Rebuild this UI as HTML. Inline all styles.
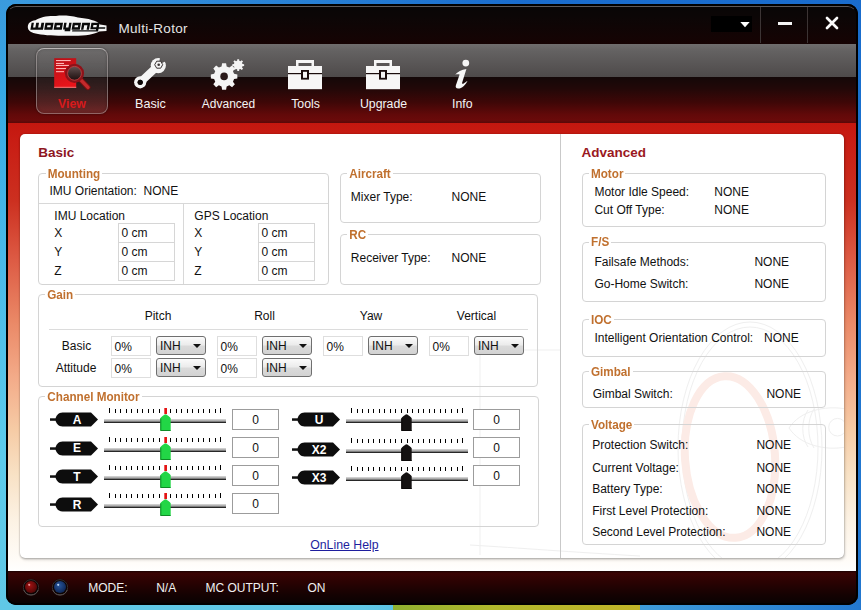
<!DOCTYPE html>
<html><head><meta charset="utf-8"><title>Multi-Rotor</title><style>
html,body{margin:0;padding:0;}
body{width:861px;height:610px;position:relative;overflow:hidden;
background:linear-gradient(60deg,rgba(16,90,200,0) 30%,rgba(16,95,200,0.78) 72%),linear-gradient(180deg,#3a9ade 0%,#36a8e4 15%,#48b8e8 40%,#5ecbea 75%,#60c8e6 100%);
font-family:"Liberation Sans", sans-serif;}
#ybar{position:absolute;left:393px;top:600px;width:247px;height:10px;background:linear-gradient(90deg,#8fb030,#b0b82c 40%,#c0b428 100%);}
#win{position:absolute;left:6px;top:4px;width:852px;height:601px;border-radius:10px;overflow:hidden;background:#000;}
#wi{position:absolute;left:-6px;top:-4px;width:861px;height:610px;}
#wi::after{content:"";position:absolute;left:6px;top:4px;width:852px;height:601px;box-sizing:border-box;border:2px solid #000;border-radius:10px;pointer-events:none;}
.r{position:absolute;}
.t{position:absolute;white-space:pre;font-family:"Liberation Sans", sans-serif;}
.grp{position:absolute;box-sizing:border-box;border:1px solid #d4d4d4;border-radius:4px;}
.lg{background:#fff;padding:0 2px;color:#c0702e;font-weight:bold;}
</style></head><body>
<div id="ybar"></div>
<div id="win"><div id="wi">
<div class="r" style="left:0px;top:0px;width:861px;height:44px;background:linear-gradient(#060606 0%,#0c0606 40%,#160303 100%);"></div>
<div class="r" style="left:7px;top:6px;width:850px;height:30px;box-sizing:border-box;border:1px solid transparent;border-top-color:#5c5858;border-radius:9px 9px 0 0;"></div>
<div class="r" style="left:760px;top:7px;width:1px;height:36px;background:#3c3434;"></div>
<div class="r" style="left:807px;top:7px;width:1px;height:36px;background:#3c3434;"></div>
<div class="r" style="left:0px;top:44px;width:861px;height:33px;background:linear-gradient(#706e6e 0%,#646262 20%,#4e4a4a 100%);"></div>
<div class="r" style="left:0px;top:77px;width:861px;height:46px;background:linear-gradient(#140808 0%,#220808 25%,#3e0707 55%,#620909 82%,#6a0a0a 94%,#5a0808 100%);"></div>
<div class="r" style="left:0px;top:123px;width:861px;height:448px;background:linear-gradient(#c4170f 0px,#c81d14 18px,#cc3020 78px,#dc5842 133px,#ea8866 198px,#f3aa88 253px,#f6cca6 308px,#f8e2c6 353px,#fcf2e4 398px,#fffcf8 438px,#ffffff 449px);"></div>
<div class="r" style="left:0px;top:571px;width:861px;height:40px;background:linear-gradient(#1a0000 0px,#3a0303 2px,#2c0202 10px,#140202 24px,#080202 34px);"></div>
<svg class="r" style="left:20px;top:10px" width="92" height="30" viewBox="20 10 92 30">
<path d="M27.8 27 C27.8 23 30.5 21 35.5 20.2 C40 17 48 15.6 56 16 C62 15.2 70 15.5 78 17.5 C88 18.5 97 20.5 100 24.5 L106.5 25.5 L106.5 31 L99 31.5 C95 34.5 84 36 72 35.8 C60 36 46 35.6 38 34 C31 33 27.8 30.5 27.8 27 Z" fill="#f6f6f6"/>
<g fill="#0a0a0a" fill-rule="evenodd" transform="translate(0 26.3) skewX(-10) translate(0 -26.3)">
<path d="M31 22.8 H43.6 V29.8 H31 Z M33.3 22.8 H35.6 V27.6 H33.3 Z M38.4 22.8 H40.8 V27.6 H38.4 Z"/>
<path d="M44.8 22.8 H53 V29.8 H44.8 Z M47.2 25.2 H50.6 V27.2 H47.2 Z"/>
<path d="M54.2 22.8 H62.4 V29.8 H54.2 Z M56.6 25.2 H60 V27.2 H56.6 Z"/>
<path d="M63.6 22.8 H66 V27.4 H68.6 V22.8 H71 V31.2 H65.4 V29.6 H68.6 V29.4 H63.6 Z"/>
<path d="M72.2 22.8 H80.4 V29.8 H72.2 Z M74.6 25.2 H78 V27.2 H74.6 Z"/>
<path d="M81.6 22.8 H89.6 V29.8 H87.2 V25.2 H84 V29.8 H81.6 Z"/>
<path d="M90.8 22.8 H99 V31.6 H73 V30.2 H96.6 V29.2 H90.8 Z M93.2 24.9 H96.6 V27.2 H93.2 Z"/>
<path d="M98 27.2 H105.5 V28.8 H98 Z"/>
</g></svg>
<div class="t" style="left:118.5px;top:20.00px;font-size:13.5px;line-height:17px;color:#e6e6e6;letter-spacing:0.3px;">Multi-Rotor</div>
<div class="r" style="left:710.5px;top:16px;width:41px;height:15.5px;background:#000;"></div>
<svg class="r" style="left:739.5px;top:22px" width="12" height="7"><path d="M0.3 0 L9.7 0 L5 5.3 Z" fill="#fff"/></svg>
<div class="r" style="left:778px;top:22px;width:14px;height:2.5px;background:#f4f4f4;"></div>
<svg class="r" style="left:824px;top:15px" width="16" height="16"><path d="M3 3 L13 13 M13 3 L3 13" stroke="#fafafa" stroke-width="2.7" stroke-linecap="round"/></svg>
<div class="r" style="left:36px;top:48px;width:72px;height:66px;box-sizing:border-box;border-radius:8px;border:1px solid rgba(190,180,180,0.5);border-top-color:rgba(220,215,215,0.65);background:linear-gradient(rgba(255,255,255,0.06),rgba(255,255,255,0.04) 44%,rgba(255,255,255,0.08) 46%,rgba(255,255,255,0.12));box-shadow:0 0 2px rgba(0,0,0,0.6),inset 0 0 3px rgba(0,0,0,0.25);"></div>
<svg class="r" style="left:48px;top:52px" width="48" height="42" viewBox="48 52 48 42">
<defs><linearGradient id="dg" x1="0" y1="0" x2="0.3" y2="1"><stop offset="0" stop-color="#b80f16"/><stop offset="1" stop-color="#e8141a"/></linearGradient>
<linearGradient id="lens" x1="0" y1="0" x2="0" y2="1"><stop offset="0" stop-color="#6a5858"/><stop offset="0.55" stop-color="#3a2a2a"/><stop offset="1" stop-color="#1a0a0a"/></linearGradient></defs>
<rect x="54.2" y="58.2" width="22" height="29.6" fill="url(#dg)"/>
<rect x="54.2" y="86.8" width="22" height="1" fill="#f07a7a"/>
<g fill="#ffb4b4"><rect x="56" y="60" width="14.7" height="1.1"/><rect x="56" y="62.9" width="8" height="1.1"/><rect x="56" y="64.9" width="13" height="1.1"/><rect x="56" y="68" width="10" height="1.1"/><rect x="56" y="71.1" width="8" height="1.1"/></g>
<path d="M80.3 79.4 L88 87.4" stroke="#7a1010" stroke-width="5.2" stroke-linecap="round"/>
<path d="M80.3 79.4 L88 87.4" stroke="#c42a2c" stroke-width="3.4" stroke-linecap="round"/>
<circle cx="74.5" cy="73.3" r="8.2" fill="url(#lens)" stroke="#8e1219" stroke-width="2.8"/>
<circle cx="74.5" cy="73.3" r="6.9" fill="none" stroke="#c04848" stroke-width="0.8"/>
</svg>
<div class="t" style="left:-28px;width:200px;text-align:center;top:96.00px;font-size:12.4px;line-height:16px;color:#d81a1c;font-weight:bold;">View</div>
<svg class="r" style="left:125px;top:52px" width="50" height="42" viewBox="125 52 50 42">
<defs><mask id="wm"><rect x="125" y="52" width="50" height="42" fill="#fff"/>
<path d="M158.7 64.7 L161 53 L172 58 Z" fill="#000"/>
<circle cx="140.2" cy="82.3" r="2.6" fill="#000"/></mask></defs>
<g mask="url(#wm)" fill="#f5f5f5">
<path d="M140.2 82.3 L157.5 66.2" stroke="#f5f5f5" stroke-width="7.8" stroke-linecap="round"/>
<circle cx="140.2" cy="82.3" r="6.1"/>
<circle cx="158.3" cy="65.6" r="7.6"/>
</g>
<circle cx="140.2" cy="82.3" r="2.5" fill="#0a0404"/>
<polygon points="162.7,64.7 160.7,68.2 156.7,68.2 154.7,64.7 156.7,61.2 160.7,61.2" fill="#f5f5f5" stroke="#3a3434" stroke-width="1"/>
<circle cx="158.7" cy="64.7" r="1.3" fill="#3a3434"/>
</svg>
<div class="t" style="left:50.5px;width:200px;text-align:center;top:96.00px;font-size:12.6px;line-height:16px;color:#f4f4f4;">Basic</div>
<svg class="r" style="left:205px;top:55px" width="45" height="40" viewBox="0 0 45 40">
<polygon points="29.08,18.84 32.35,19.41 32.35,23.39 29.08,23.96 27.97,26.64 29.88,29.36 27.06,32.18 24.34,30.27 21.66,31.38 21.09,34.65 17.11,34.65 16.54,31.38 13.86,30.27 11.14,32.18 8.32,29.36 10.23,26.64 9.12,23.96 5.85,23.39 5.85,19.41 9.12,18.84 10.23,16.16 8.32,13.44 11.14,10.62 13.86,12.53 16.54,11.42 17.11,8.15 21.09,8.15 21.66,11.42 24.34,12.53 27.06,10.62 29.88,13.44 27.97,16.16" fill="#f4f4f4"/><circle cx="19.1" cy="21.4" r="3.8" fill="#2a1a1a"/>
<polygon points="37.46,9.01 39.13,9.21 39.13,10.99 37.46,11.19 36.99,12.34 38.03,13.66 36.76,14.93 35.44,13.89 34.29,14.36 34.09,16.03 32.31,16.03 32.11,14.36 30.96,13.89 29.64,14.93 28.37,13.66 29.41,12.34 28.94,11.19 27.27,10.99 27.27,9.21 28.94,9.01 29.41,7.86 28.37,6.54 29.64,5.27 30.96,6.31 32.11,5.84 32.31,4.17 34.09,4.17 34.29,5.84 35.44,6.31 36.76,5.27 38.03,6.54 36.99,7.86" fill="#f4f4f4"/>
</svg>
<div class="t" style="left:128.5px;width:200px;text-align:center;top:97.00px;font-size:12px;line-height:15px;color:#f4f4f4;">Advanced</div>
<svg class="r" style="left:288px;top:59px" width="36" height="31" viewBox="0 0 36 31">
<path d="M8 1 L26 1 L26 7 L8 7 Z M10.5 4 L23.5 4 L23.5 7 L10.5 7 Z" fill="#f6f6f6" fill-rule="evenodd"/>
<rect x="0" y="7" width="34" height="23.2" fill="#f6f6f6"/>
<rect x="0" y="14" width="34" height="1.2" fill="#1a0c0c"/>
<rect x="13" y="11" width="8" height="9.6" fill="#1a0c0c"/>
<rect x="15" y="12.8" width="4" height="6" fill="#f6f6f6"/>
</svg>
<div class="t" style="left:205.5px;width:200px;text-align:center;top:97.00px;font-size:12.3px;line-height:15px;color:#f4f4f4;">Tools</div>
<svg class="r" style="left:366px;top:59px" width="36" height="31" viewBox="0 0 36 31">
<path d="M8 1 L26 1 L26 7 L8 7 Z M10.5 4 L23.5 4 L23.5 7 L10.5 7 Z" fill="#f6f6f6" fill-rule="evenodd"/>
<rect x="0" y="7" width="34" height="23.2" fill="#f6f6f6"/>
<rect x="0" y="14" width="34" height="1.2" fill="#1a0c0c"/>
<rect x="13" y="11" width="8" height="9.6" fill="#1a0c0c"/>
<rect x="15" y="12.8" width="4" height="6" fill="#f6f6f6"/>
</svg>
<div class="t" style="left:283.5px;width:200px;text-align:center;top:97.00px;font-size:12.3px;line-height:15px;color:#f4f4f4;">Upgrade</div>
<svg class="r" style="left:450px;top:58px" width="22" height="32" viewBox="0 0 22 32">
<circle cx="15.8" cy="5.1" r="3.4" fill="#f6f6f6"/>
<path d="M5.2 16.6 C7.5 14.2 11.5 11.6 16.4 11.1 L12.2 24.4 C11.8 25.9 12.6 26.2 14 25.2 L17.6 22.8 C15.6 27 12 30.6 8.2 30.6 C5.9 30.6 5.3 29.2 5.9 27.3 L9.6 16.6 C8.6 16 7 16 5.2 16.6 Z" fill="#f6f6f6"/>
</svg>
<div class="t" style="left:362.3px;width:200px;text-align:center;top:97.00px;font-size:12.3px;line-height:15px;color:#f4f4f4;">Info</div>
<div class="r" style="left:20px;top:134px;width:824px;height:424px;background:#fff;border-radius:5px;box-shadow:0 0 2px rgba(0,0,0,0.28),0 1px 2px rgba(0,0,0,0.14),1px 2px 3px rgba(0,0,0,0.14);"></div>
<svg class="r" style="left:440px;top:300px" width="404" height="258" viewBox="440 300 404 258">
<g fill="none" stroke="#efefef" stroke-width="1">
<path d="M480 350 L560 350 M480 350 L480 555 M470 545 C520 548 570 552 640 556"/>
<ellipse cx="750" cy="448" rx="72" ry="126"/>
<ellipse cx="750" cy="448" rx="68" ry="121"/>
<path d="M789 428 C800 411 825 405 846 409 M789 428 C800 445 825 451 846 447 M808 410 C801 420 801 437 808 447 M814 409 C807 420 807 437 814 448"/>
<circle cx="837.5" cy="427.2" r="8.8"/>
</g>
<ellipse cx="730" cy="457" rx="45" ry="81" fill="none" stroke="#fcebe6" stroke-width="8" transform="rotate(-4 730 457)"/>
</svg>
<div class="r" style="left:560px;top:134px;width:1px;height:424px;background:#c9c9c9;"></div>
<div class="t" style="left:38.3px;top:144.00px;font-size:13.5px;line-height:17px;color:#8e1622;font-weight:bold;">Basic</div>
<div class="t" style="left:581.5px;top:144.00px;font-size:13.5px;line-height:17px;color:#9a1822;font-weight:bold;">Advanced</div>
<div class="grp" style="left:38px;top:173px;width:291px;height:112px;"></div>
<div class="t lg" style="left:45.7px;top:167.00px;font-size:11.7px;line-height:14px;transform:scaleY(1.12);transform-origin:0 11px;">Mounting</div>
<div class="t" style="left:49.5px;top:184.00px;font-size:12px;line-height:15px;color:#111;">IMU Orientation:  NONE</div>
<div class="r" style="left:39px;top:203px;width:289px;height:1px;background:#d8d8d8;"></div>
<div class="r" style="left:183px;top:204px;width:1px;height:80px;background:#d8d8d8;"></div>
<div class="t" style="left:54.3px;top:209.00px;font-size:12px;line-height:15px;color:#111;">IMU Location</div>
<div class="t" style="left:194.3px;top:209.00px;font-size:12px;line-height:15px;color:#111;">GPS Location</div>
<div class="t" style="left:54.3px;top:226.00px;font-size:12px;line-height:15px;color:#111;">X</div>
<div class="t" style="left:194.3px;top:226.00px;font-size:12px;line-height:15px;color:#111;">X</div>
<div class="t" style="left:54.3px;top:245.00px;font-size:12px;line-height:15px;color:#111;">Y</div>
<div class="t" style="left:194.3px;top:245.00px;font-size:12px;line-height:15px;color:#111;">Y</div>
<div class="t" style="left:54.3px;top:264.00px;font-size:12px;line-height:15px;color:#111;">Z</div>
<div class="t" style="left:194.3px;top:264.00px;font-size:12px;line-height:15px;color:#111;">Z</div>
<div class="r" style="left:118px;top:223px;width:57px;height:58px;box-sizing:border-box;border:1px solid #d6d6d6;"></div>
<div class="r" style="left:118px;top:242px;width:57px;height:1px;background:#d6d6d6;"></div>
<div class="r" style="left:118px;top:261px;width:57px;height:1px;background:#d6d6d6;"></div>
<div class="t" style="left:121.5px;top:226.00px;font-size:12px;line-height:15px;color:#111;">0 cm</div>
<div class="t" style="left:121.5px;top:245.00px;font-size:12px;line-height:15px;color:#111;">0 cm</div>
<div class="t" style="left:121.5px;top:264.00px;font-size:12px;line-height:15px;color:#111;">0 cm</div>
<div class="r" style="left:258px;top:223px;width:57px;height:58px;box-sizing:border-box;border:1px solid #d6d6d6;"></div>
<div class="r" style="left:258px;top:242px;width:57px;height:1px;background:#d6d6d6;"></div>
<div class="r" style="left:258px;top:261px;width:57px;height:1px;background:#d6d6d6;"></div>
<div class="t" style="left:261.5px;top:226.00px;font-size:12px;line-height:15px;color:#111;">0 cm</div>
<div class="t" style="left:261.5px;top:245.00px;font-size:12px;line-height:15px;color:#111;">0 cm</div>
<div class="t" style="left:261.5px;top:264.00px;font-size:12px;line-height:15px;color:#111;">0 cm</div>
<div class="grp" style="left:340px;top:173px;width:201px;height:50px;"></div>
<div class="t lg" style="left:347.2px;top:167.00px;font-size:11.7px;line-height:14px;transform:scaleY(1.12);transform-origin:0 11px;">Aircraft</div>
<div class="t" style="left:350.8px;top:190.00px;font-size:12px;line-height:15px;color:#111;">Mixer Type:</div>
<div class="t" style="left:451.6px;top:190.00px;font-size:12px;line-height:15px;color:#111;">NONE</div>
<div class="grp" style="left:340px;top:234px;width:201px;height:51px;"></div>
<div class="t lg" style="left:347.2px;top:228.00px;font-size:11.7px;line-height:14px;transform:scaleY(1.12);transform-origin:0 11px;">RC</div>
<div class="t" style="left:350.8px;top:251.00px;font-size:12px;line-height:15px;color:#111;">Receiver Type:</div>
<div class="t" style="left:451.6px;top:251.00px;font-size:12px;line-height:15px;color:#111;">NONE</div>
<div class="grp" style="left:38px;top:294px;width:500px;height:93px;"></div>
<div class="t lg" style="left:45.2px;top:288.00px;font-size:11.7px;line-height:14px;transform:scaleY(1.12);transform-origin:0 11px;">Gain</div>
<div class="t" style="left:58px;width:200px;text-align:center;top:309.00px;font-size:12px;line-height:15px;color:#111;">Pitch</div>
<div class="t" style="left:164.5px;width:200px;text-align:center;top:309.00px;font-size:12px;line-height:15px;color:#111;">Roll</div>
<div class="t" style="left:271px;width:200px;text-align:center;top:309.00px;font-size:12px;line-height:15px;color:#111;">Yaw</div>
<div class="t" style="left:376.5px;width:200px;text-align:center;top:309.00px;font-size:12px;line-height:15px;color:#111;">Vertical</div>
<div class="r" style="left:49px;top:329px;width:479px;height:1px;background:#dcdcdc;"></div>
<div class="t" style="left:-23.5px;width:200px;text-align:center;top:339.00px;font-size:12px;line-height:15px;color:#111;">Basic</div>
<div class="t" style="left:-24px;width:200px;text-align:center;top:361.00px;font-size:12px;line-height:15px;color:#111;">Attitude</div>
<div class="r" style="left:111px;top:336px;width:40px;height:19.5px;box-sizing:border-box;border:1px solid #dedede;background:#fff;"></div>
<div class="t" style="left:114.5px;top:340.00px;font-size:12px;line-height:15px;color:#111;">0%</div>
<div class="r" style="left:156px;top:336px;width:50px;height:19px;box-sizing:border-box;border:1px solid #6f6f6f;border-radius:3px;background:linear-gradient(#fbfbfb 0%,#ececec 45%,#dadada 55%,#d2d2d2 100%);"></div>
<div class="t" style="left:160px;top:339.00px;font-size:12px;line-height:15px;color:#111;">INH</div>
<svg class="r" style="left:192.6px;top:344px" width="8" height="4"><path d="M0 0 L8 0 L4 4 Z" fill="#111"/></svg>
<div class="r" style="left:111px;top:358px;width:40px;height:19.5px;box-sizing:border-box;border:1px solid #dedede;background:#fff;"></div>
<div class="t" style="left:114.5px;top:362.00px;font-size:12px;line-height:15px;color:#111;">0%</div>
<div class="r" style="left:156px;top:358px;width:50px;height:19px;box-sizing:border-box;border:1px solid #6f6f6f;border-radius:3px;background:linear-gradient(#fbfbfb 0%,#ececec 45%,#dadada 55%,#d2d2d2 100%);"></div>
<div class="t" style="left:160px;top:361.00px;font-size:12px;line-height:15px;color:#111;">INH</div>
<svg class="r" style="left:192.6px;top:366px" width="8" height="4"><path d="M0 0 L8 0 L4 4 Z" fill="#111"/></svg>
<div class="r" style="left:217px;top:336px;width:40px;height:19.5px;box-sizing:border-box;border:1px solid #dedede;background:#fff;"></div>
<div class="t" style="left:220.5px;top:340.00px;font-size:12px;line-height:15px;color:#111;">0%</div>
<div class="r" style="left:262px;top:336px;width:50px;height:19px;box-sizing:border-box;border:1px solid #6f6f6f;border-radius:3px;background:linear-gradient(#fbfbfb 0%,#ececec 45%,#dadada 55%,#d2d2d2 100%);"></div>
<div class="t" style="left:266px;top:339.00px;font-size:12px;line-height:15px;color:#111;">INH</div>
<svg class="r" style="left:298.6px;top:344px" width="8" height="4"><path d="M0 0 L8 0 L4 4 Z" fill="#111"/></svg>
<div class="r" style="left:217px;top:358px;width:40px;height:19.5px;box-sizing:border-box;border:1px solid #dedede;background:#fff;"></div>
<div class="t" style="left:220.5px;top:362.00px;font-size:12px;line-height:15px;color:#111;">0%</div>
<div class="r" style="left:262px;top:358px;width:50px;height:19px;box-sizing:border-box;border:1px solid #6f6f6f;border-radius:3px;background:linear-gradient(#fbfbfb 0%,#ececec 45%,#dadada 55%,#d2d2d2 100%);"></div>
<div class="t" style="left:266px;top:361.00px;font-size:12px;line-height:15px;color:#111;">INH</div>
<svg class="r" style="left:298.6px;top:366px" width="8" height="4"><path d="M0 0 L8 0 L4 4 Z" fill="#111"/></svg>
<div class="r" style="left:323px;top:336px;width:40px;height:19.5px;box-sizing:border-box;border:1px solid #dedede;background:#fff;"></div>
<div class="t" style="left:326.5px;top:340.00px;font-size:12px;line-height:15px;color:#111;">0%</div>
<div class="r" style="left:368px;top:336px;width:50px;height:19px;box-sizing:border-box;border:1px solid #6f6f6f;border-radius:3px;background:linear-gradient(#fbfbfb 0%,#ececec 45%,#dadada 55%,#d2d2d2 100%);"></div>
<div class="t" style="left:372px;top:339.00px;font-size:12px;line-height:15px;color:#111;">INH</div>
<svg class="r" style="left:404.6px;top:344px" width="8" height="4"><path d="M0 0 L8 0 L4 4 Z" fill="#111"/></svg>
<div class="r" style="left:429px;top:336px;width:40px;height:19.5px;box-sizing:border-box;border:1px solid #dedede;background:#fff;"></div>
<div class="t" style="left:432.5px;top:340.00px;font-size:12px;line-height:15px;color:#111;">0%</div>
<div class="r" style="left:474px;top:336px;width:50px;height:19px;box-sizing:border-box;border:1px solid #6f6f6f;border-radius:3px;background:linear-gradient(#fbfbfb 0%,#ececec 45%,#dadada 55%,#d2d2d2 100%);"></div>
<div class="t" style="left:478px;top:339.00px;font-size:12px;line-height:15px;color:#111;">INH</div>
<svg class="r" style="left:510.6px;top:344px" width="8" height="4"><path d="M0 0 L8 0 L4 4 Z" fill="#111"/></svg>
<div class="grp" style="left:38px;top:396px;width:501px;height:131px;"></div>
<div class="t lg" style="left:45.3px;top:390.00px;font-size:11.7px;line-height:14px;transform:scaleY(1.12);transform-origin:0 11px;">Channel Monitor</div>
<svg class="r" style="left:50px;top:412.1px" width="50" height="15" viewBox="0 0 50 15">
<rect x="0" y="6.3" width="7" height="2.5" fill="#111"/>
<path d="M12.5 0.5 L41 0.5 L48 7.5 L41 14.5 L12.5 14.5 C8.5 14.5 5.5 11 5.5 7.5 C5.5 4 8.5 0.5 12.5 0.5 Z" fill="#0d0d0d"/>
</svg>
<div class="t" style="left:-23px;width:200px;text-align:center;top:413.00px;font-size:12px;line-height:15px;color:#fff;font-weight:bold;">A</div>
<div class="r" style="left:104px;top:419px;width:122px;height:4px;background:linear-gradient(#dadada 0%,#bdbdbd 30%,#8c8c8c 60%,#2c2c2c 78%,#222 100%);"></div>
<svg class="r" style="left:104px;top:408px" width="124" height="7"><rect x="5" y="0" width="1" height="5" fill="#000"/><rect x="11" y="1" width="1" height="4" fill="#000"/><rect x="16" y="1" width="1" height="4" fill="#000"/><rect x="22" y="1" width="1" height="4" fill="#000"/><rect x="27" y="1" width="1" height="4" fill="#000"/><rect x="33" y="1" width="1" height="4" fill="#000"/><rect x="38" y="1" width="1" height="4" fill="#000"/><rect x="44" y="1" width="1" height="4" fill="#000"/><rect x="49" y="1" width="1" height="4" fill="#000"/><rect x="55" y="1" width="1" height="4" fill="#000"/><rect x="66" y="1" width="1" height="4" fill="#000"/><rect x="72" y="1" width="1" height="4" fill="#000"/><rect x="77" y="1" width="1" height="4" fill="#000"/><rect x="83" y="1" width="1" height="4" fill="#000"/><rect x="88" y="1" width="1" height="4" fill="#000"/><rect x="94" y="1" width="1" height="4" fill="#000"/><rect x="99" y="1" width="1" height="4" fill="#000"/><rect x="105" y="1" width="1" height="4" fill="#000"/><rect x="111" y="1" width="1" height="4" fill="#000"/><rect x="116" y="0" width="1" height="5" fill="#000"/><rect x="60.3" y="0" width="2.7" height="6" fill="#e41414"/></svg>
<svg class="r" style="left:160.10px;top:414.10px" width="12" height="18" viewBox="0 0 12 18">
<path d="M0.3 17 L0.3 4.4 C0.6 3.2 4.2 0.5 5.5 0.2 C6.8 0.5 10.4 3.2 10.7 4.4 L10.7 17 Z" fill="#22d646"/>
<path d="M0.8 4.5 L0.8 16.5 L10.5 16.5" fill="none" stroke="#0f8a26" stroke-width="1"/>
</svg>
<div class="r" style="left:232px;top:408.5px;width:47px;height:21px;box-sizing:border-box;border:1px solid #9c9c9c;background:#fff;"></div>
<div class="t" style="left:155.5px;width:200px;text-align:center;top:413.00px;font-size:12px;line-height:15px;color:#111;">0</div>
<svg class="r" style="left:50px;top:440.7px" width="50" height="15" viewBox="0 0 50 15">
<rect x="0" y="6.3" width="7" height="2.5" fill="#111"/>
<path d="M12.5 0.5 L41 0.5 L48 7.5 L41 14.5 L12.5 14.5 C8.5 14.5 5.5 11 5.5 7.5 C5.5 4 8.5 0.5 12.5 0.5 Z" fill="#0d0d0d"/>
</svg>
<div class="t" style="left:-23px;width:200px;text-align:center;top:441.00px;font-size:12px;line-height:15px;color:#fff;font-weight:bold;">E</div>
<div class="r" style="left:104px;top:448px;width:122px;height:4px;background:linear-gradient(#dadada 0%,#bdbdbd 30%,#8c8c8c 60%,#2c2c2c 78%,#222 100%);"></div>
<svg class="r" style="left:104px;top:437px" width="124" height="7"><rect x="5" y="0" width="1" height="5" fill="#000"/><rect x="11" y="1" width="1" height="4" fill="#000"/><rect x="16" y="1" width="1" height="4" fill="#000"/><rect x="22" y="1" width="1" height="4" fill="#000"/><rect x="27" y="1" width="1" height="4" fill="#000"/><rect x="33" y="1" width="1" height="4" fill="#000"/><rect x="38" y="1" width="1" height="4" fill="#000"/><rect x="44" y="1" width="1" height="4" fill="#000"/><rect x="49" y="1" width="1" height="4" fill="#000"/><rect x="55" y="1" width="1" height="4" fill="#000"/><rect x="66" y="1" width="1" height="4" fill="#000"/><rect x="72" y="1" width="1" height="4" fill="#000"/><rect x="77" y="1" width="1" height="4" fill="#000"/><rect x="83" y="1" width="1" height="4" fill="#000"/><rect x="88" y="1" width="1" height="4" fill="#000"/><rect x="94" y="1" width="1" height="4" fill="#000"/><rect x="99" y="1" width="1" height="4" fill="#000"/><rect x="105" y="1" width="1" height="4" fill="#000"/><rect x="111" y="1" width="1" height="4" fill="#000"/><rect x="116" y="0" width="1" height="5" fill="#000"/><rect x="60.3" y="0" width="2.7" height="6" fill="#e41414"/></svg>
<svg class="r" style="left:160.10px;top:443.10px" width="12" height="18" viewBox="0 0 12 18">
<path d="M0.3 17 L0.3 4.4 C0.6 3.2 4.2 0.5 5.5 0.2 C6.8 0.5 10.4 3.2 10.7 4.4 L10.7 17 Z" fill="#22d646"/>
<path d="M0.8 4.5 L0.8 16.5 L10.5 16.5" fill="none" stroke="#0f8a26" stroke-width="1"/>
</svg>
<div class="r" style="left:232px;top:437px;width:47px;height:21px;box-sizing:border-box;border:1px solid #9c9c9c;background:#fff;"></div>
<div class="t" style="left:155.5px;width:200px;text-align:center;top:441.00px;font-size:12px;line-height:15px;color:#111;">0</div>
<svg class="r" style="left:50px;top:469.0px" width="50" height="15" viewBox="0 0 50 15">
<rect x="0" y="6.3" width="7" height="2.5" fill="#111"/>
<path d="M12.5 0.5 L41 0.5 L48 7.5 L41 14.5 L12.5 14.5 C8.5 14.5 5.5 11 5.5 7.5 C5.5 4 8.5 0.5 12.5 0.5 Z" fill="#0d0d0d"/>
</svg>
<div class="t" style="left:-23px;width:200px;text-align:center;top:470.00px;font-size:12px;line-height:15px;color:#fff;font-weight:bold;">T</div>
<div class="r" style="left:104px;top:476px;width:122px;height:4px;background:linear-gradient(#dadada 0%,#bdbdbd 30%,#8c8c8c 60%,#2c2c2c 78%,#222 100%);"></div>
<svg class="r" style="left:104px;top:465px" width="124" height="7"><rect x="5" y="0" width="1" height="5" fill="#000"/><rect x="11" y="1" width="1" height="4" fill="#000"/><rect x="16" y="1" width="1" height="4" fill="#000"/><rect x="22" y="1" width="1" height="4" fill="#000"/><rect x="27" y="1" width="1" height="4" fill="#000"/><rect x="33" y="1" width="1" height="4" fill="#000"/><rect x="38" y="1" width="1" height="4" fill="#000"/><rect x="44" y="1" width="1" height="4" fill="#000"/><rect x="49" y="1" width="1" height="4" fill="#000"/><rect x="55" y="1" width="1" height="4" fill="#000"/><rect x="66" y="1" width="1" height="4" fill="#000"/><rect x="72" y="1" width="1" height="4" fill="#000"/><rect x="77" y="1" width="1" height="4" fill="#000"/><rect x="83" y="1" width="1" height="4" fill="#000"/><rect x="88" y="1" width="1" height="4" fill="#000"/><rect x="94" y="1" width="1" height="4" fill="#000"/><rect x="99" y="1" width="1" height="4" fill="#000"/><rect x="105" y="1" width="1" height="4" fill="#000"/><rect x="111" y="1" width="1" height="4" fill="#000"/><rect x="116" y="0" width="1" height="5" fill="#000"/><rect x="60.3" y="0" width="2.7" height="6" fill="#e41414"/></svg>
<svg class="r" style="left:160.10px;top:471.10px" width="12" height="18" viewBox="0 0 12 18">
<path d="M0.3 17 L0.3 4.4 C0.6 3.2 4.2 0.5 5.5 0.2 C6.8 0.5 10.4 3.2 10.7 4.4 L10.7 17 Z" fill="#22d646"/>
<path d="M0.8 4.5 L0.8 16.5 L10.5 16.5" fill="none" stroke="#0f8a26" stroke-width="1"/>
</svg>
<div class="r" style="left:232px;top:465px;width:47px;height:21px;box-sizing:border-box;border:1px solid #9c9c9c;background:#fff;"></div>
<div class="t" style="left:155.5px;width:200px;text-align:center;top:469.00px;font-size:12px;line-height:15px;color:#111;">0</div>
<svg class="r" style="left:50px;top:497.3px" width="50" height="15" viewBox="0 0 50 15">
<rect x="0" y="6.3" width="7" height="2.5" fill="#111"/>
<path d="M12.5 0.5 L41 0.5 L48 7.5 L41 14.5 L12.5 14.5 C8.5 14.5 5.5 11 5.5 7.5 C5.5 4 8.5 0.5 12.5 0.5 Z" fill="#0d0d0d"/>
</svg>
<div class="t" style="left:-23px;width:200px;text-align:center;top:498.00px;font-size:12px;line-height:15px;color:#fff;font-weight:bold;">R</div>
<div class="r" style="left:104px;top:504px;width:122px;height:4px;background:linear-gradient(#dadada 0%,#bdbdbd 30%,#8c8c8c 60%,#2c2c2c 78%,#222 100%);"></div>
<svg class="r" style="left:104px;top:493px" width="124" height="7"><rect x="5" y="0" width="1" height="5" fill="#000"/><rect x="11" y="1" width="1" height="4" fill="#000"/><rect x="16" y="1" width="1" height="4" fill="#000"/><rect x="22" y="1" width="1" height="4" fill="#000"/><rect x="27" y="1" width="1" height="4" fill="#000"/><rect x="33" y="1" width="1" height="4" fill="#000"/><rect x="38" y="1" width="1" height="4" fill="#000"/><rect x="44" y="1" width="1" height="4" fill="#000"/><rect x="49" y="1" width="1" height="4" fill="#000"/><rect x="55" y="1" width="1" height="4" fill="#000"/><rect x="66" y="1" width="1" height="4" fill="#000"/><rect x="72" y="1" width="1" height="4" fill="#000"/><rect x="77" y="1" width="1" height="4" fill="#000"/><rect x="83" y="1" width="1" height="4" fill="#000"/><rect x="88" y="1" width="1" height="4" fill="#000"/><rect x="94" y="1" width="1" height="4" fill="#000"/><rect x="99" y="1" width="1" height="4" fill="#000"/><rect x="105" y="1" width="1" height="4" fill="#000"/><rect x="111" y="1" width="1" height="4" fill="#000"/><rect x="116" y="0" width="1" height="5" fill="#000"/><rect x="60.3" y="0" width="2.7" height="6" fill="#e41414"/></svg>
<svg class="r" style="left:160.10px;top:499.10px" width="12" height="18" viewBox="0 0 12 18">
<path d="M0.3 17 L0.3 4.4 C0.6 3.2 4.2 0.5 5.5 0.2 C6.8 0.5 10.4 3.2 10.7 4.4 L10.7 17 Z" fill="#22d646"/>
<path d="M0.8 4.5 L0.8 16.5 L10.5 16.5" fill="none" stroke="#0f8a26" stroke-width="1"/>
</svg>
<div class="r" style="left:232px;top:493px;width:47px;height:21px;box-sizing:border-box;border:1px solid #9c9c9c;background:#fff;"></div>
<div class="t" style="left:155.5px;width:200px;text-align:center;top:497.00px;font-size:12px;line-height:15px;color:#111;">0</div>
<svg class="r" style="left:292px;top:412.0px" width="50" height="15" viewBox="0 0 50 15">
<rect x="0" y="6.3" width="7" height="2.5" fill="#111"/>
<path d="M12.5 0.5 L41 0.5 L48 7.5 L41 14.5 L12.5 14.5 C8.5 14.5 5.5 11 5.5 7.5 C5.5 4 8.5 0.5 12.5 0.5 Z" fill="#0d0d0d"/>
</svg>
<div class="t" style="left:219px;width:200px;text-align:center;top:413.00px;font-size:12px;line-height:15px;color:#fff;font-weight:bold;">U</div>
<div class="r" style="left:346px;top:419px;width:122px;height:4px;background:linear-gradient(#dadada 0%,#bdbdbd 30%,#8c8c8c 60%,#2c2c2c 78%,#222 100%);"></div>
<svg class="r" style="left:346px;top:408px" width="124" height="7"><rect x="5" y="0" width="1" height="5" fill="#000"/><rect x="11" y="1" width="1" height="4" fill="#000"/><rect x="16" y="1" width="1" height="4" fill="#000"/><rect x="22" y="1" width="1" height="4" fill="#000"/><rect x="27" y="1" width="1" height="4" fill="#000"/><rect x="33" y="1" width="1" height="4" fill="#000"/><rect x="38" y="1" width="1" height="4" fill="#000"/><rect x="44" y="1" width="1" height="4" fill="#000"/><rect x="49" y="1" width="1" height="4" fill="#000"/><rect x="55" y="1" width="1" height="4" fill="#000"/><rect x="61" y="1" width="1" height="4" fill="#000"/><rect x="66" y="1" width="1" height="4" fill="#000"/><rect x="72" y="1" width="1" height="4" fill="#000"/><rect x="77" y="1" width="1" height="4" fill="#000"/><rect x="83" y="1" width="1" height="4" fill="#000"/><rect x="88" y="1" width="1" height="4" fill="#000"/><rect x="94" y="1" width="1" height="4" fill="#000"/><rect x="99" y="1" width="1" height="4" fill="#000"/><rect x="105" y="1" width="1" height="4" fill="#000"/><rect x="111" y="1" width="1" height="4" fill="#000"/><rect x="116" y="0" width="1" height="5" fill="#000"/></svg>
<svg class="r" style="left:401.10px;top:414.10px" width="12" height="18" viewBox="0 0 12 18">
<path d="M0.3 17 L0.3 4.4 C0.6 3.2 4.2 0.5 5.5 0.2 C6.8 0.5 10.4 3.2 10.7 4.4 L10.7 17 Z" fill="#151212"/>
<path d="M0.8 4.5 L0.8 16.5 L10.5 16.5" fill="none" stroke="#0a0808" stroke-width="1"/>
</svg>
<div class="r" style="left:473px;top:408.5px;width:47px;height:21px;box-sizing:border-box;border:1px solid #9c9c9c;background:#fff;"></div>
<div class="t" style="left:396.5px;width:200px;text-align:center;top:413.00px;font-size:12px;line-height:15px;color:#111;">0</div>
<svg class="r" style="left:292px;top:442.2px" width="50" height="15" viewBox="0 0 50 15">
<rect x="0" y="6.3" width="7" height="2.5" fill="#111"/>
<path d="M12.5 0.5 L41 0.5 L48 7.5 L41 14.5 L12.5 14.5 C8.5 14.5 5.5 11 5.5 7.5 C5.5 4 8.5 0.5 12.5 0.5 Z" fill="#0d0d0d"/>
</svg>
<div class="t" style="left:219px;width:200px;text-align:center;top:443.00px;font-size:12px;line-height:15px;color:#fff;font-weight:bold;">X2</div>
<div class="r" style="left:346px;top:449px;width:122px;height:4px;background:linear-gradient(#dadada 0%,#bdbdbd 30%,#8c8c8c 60%,#2c2c2c 78%,#222 100%);"></div>
<svg class="r" style="left:346px;top:438px" width="124" height="7"><rect x="5" y="0" width="1" height="5" fill="#000"/><rect x="11" y="1" width="1" height="4" fill="#000"/><rect x="16" y="1" width="1" height="4" fill="#000"/><rect x="22" y="1" width="1" height="4" fill="#000"/><rect x="27" y="1" width="1" height="4" fill="#000"/><rect x="33" y="1" width="1" height="4" fill="#000"/><rect x="38" y="1" width="1" height="4" fill="#000"/><rect x="44" y="1" width="1" height="4" fill="#000"/><rect x="49" y="1" width="1" height="4" fill="#000"/><rect x="55" y="1" width="1" height="4" fill="#000"/><rect x="61" y="1" width="1" height="4" fill="#000"/><rect x="66" y="1" width="1" height="4" fill="#000"/><rect x="72" y="1" width="1" height="4" fill="#000"/><rect x="77" y="1" width="1" height="4" fill="#000"/><rect x="83" y="1" width="1" height="4" fill="#000"/><rect x="88" y="1" width="1" height="4" fill="#000"/><rect x="94" y="1" width="1" height="4" fill="#000"/><rect x="99" y="1" width="1" height="4" fill="#000"/><rect x="105" y="1" width="1" height="4" fill="#000"/><rect x="111" y="1" width="1" height="4" fill="#000"/><rect x="116" y="0" width="1" height="5" fill="#000"/></svg>
<svg class="r" style="left:401.10px;top:444.10px" width="12" height="18" viewBox="0 0 12 18">
<path d="M0.3 17 L0.3 4.4 C0.6 3.2 4.2 0.5 5.5 0.2 C6.8 0.5 10.4 3.2 10.7 4.4 L10.7 17 Z" fill="#151212"/>
<path d="M0.8 4.5 L0.8 16.5 L10.5 16.5" fill="none" stroke="#0a0808" stroke-width="1"/>
</svg>
<div class="r" style="left:473px;top:437px;width:47px;height:21px;box-sizing:border-box;border:1px solid #9c9c9c;background:#fff;"></div>
<div class="t" style="left:396.5px;width:200px;text-align:center;top:441.00px;font-size:12px;line-height:15px;color:#111;">0</div>
<svg class="r" style="left:292px;top:470.0px" width="50" height="15" viewBox="0 0 50 15">
<rect x="0" y="6.3" width="7" height="2.5" fill="#111"/>
<path d="M12.5 0.5 L41 0.5 L48 7.5 L41 14.5 L12.5 14.5 C8.5 14.5 5.5 11 5.5 7.5 C5.5 4 8.5 0.5 12.5 0.5 Z" fill="#0d0d0d"/>
</svg>
<div class="t" style="left:219px;width:200px;text-align:center;top:471.00px;font-size:12px;line-height:15px;color:#fff;font-weight:bold;">X3</div>
<div class="r" style="left:346px;top:477px;width:122px;height:4px;background:linear-gradient(#dadada 0%,#bdbdbd 30%,#8c8c8c 60%,#2c2c2c 78%,#222 100%);"></div>
<svg class="r" style="left:346px;top:466px" width="124" height="7"><rect x="5" y="0" width="1" height="5" fill="#000"/><rect x="11" y="1" width="1" height="4" fill="#000"/><rect x="16" y="1" width="1" height="4" fill="#000"/><rect x="22" y="1" width="1" height="4" fill="#000"/><rect x="27" y="1" width="1" height="4" fill="#000"/><rect x="33" y="1" width="1" height="4" fill="#000"/><rect x="38" y="1" width="1" height="4" fill="#000"/><rect x="44" y="1" width="1" height="4" fill="#000"/><rect x="49" y="1" width="1" height="4" fill="#000"/><rect x="55" y="1" width="1" height="4" fill="#000"/><rect x="61" y="1" width="1" height="4" fill="#000"/><rect x="66" y="1" width="1" height="4" fill="#000"/><rect x="72" y="1" width="1" height="4" fill="#000"/><rect x="77" y="1" width="1" height="4" fill="#000"/><rect x="83" y="1" width="1" height="4" fill="#000"/><rect x="88" y="1" width="1" height="4" fill="#000"/><rect x="94" y="1" width="1" height="4" fill="#000"/><rect x="99" y="1" width="1" height="4" fill="#000"/><rect x="105" y="1" width="1" height="4" fill="#000"/><rect x="111" y="1" width="1" height="4" fill="#000"/><rect x="116" y="0" width="1" height="5" fill="#000"/></svg>
<svg class="r" style="left:401.10px;top:472.10px" width="12" height="18" viewBox="0 0 12 18">
<path d="M0.3 17 L0.3 4.4 C0.6 3.2 4.2 0.5 5.5 0.2 C6.8 0.5 10.4 3.2 10.7 4.4 L10.7 17 Z" fill="#151212"/>
<path d="M0.8 4.5 L0.8 16.5 L10.5 16.5" fill="none" stroke="#0a0808" stroke-width="1"/>
</svg>
<div class="r" style="left:473px;top:465px;width:47px;height:21px;box-sizing:border-box;border:1px solid #9c9c9c;background:#fff;"></div>
<div class="t" style="left:396.5px;width:200px;text-align:center;top:469.00px;font-size:12px;line-height:15px;color:#111;">0</div>
<div class="t" style="left:310.2px;top:538.00px;font-size:12.3px;line-height:15px;color:#1e1e9e;text-decoration:underline;">OnLine Help</div>
<div class="grp" style="left:582px;top:173px;width:244px;height:54px;"></div>
<div class="t lg" style="left:589px;top:167.00px;font-size:11.7px;line-height:14px;transform:scaleY(1.12);transform-origin:0 11px;">Motor</div>
<div class="t" style="left:594.4px;top:185.00px;font-size:12px;line-height:15px;color:#111;">Motor Idle Speed:</div>
<div class="t" style="left:714.3px;top:185.00px;font-size:12px;line-height:15px;color:#111;">NONE</div>
<div class="t" style="left:594.4px;top:203.00px;font-size:12px;line-height:15px;color:#111;">Cut Off Type:</div>
<div class="t" style="left:714.3px;top:203.00px;font-size:12px;line-height:15px;color:#111;">NONE</div>
<div class="grp" style="left:582px;top:242px;width:244px;height:60px;"></div>
<div class="t lg" style="left:589px;top:235.00px;font-size:11.7px;line-height:14px;transform:scaleY(1.12);transform-origin:0 11px;">F/S</div>
<div class="t" style="left:594.4px;top:255.00px;font-size:12px;line-height:15px;color:#111;">Failsafe Methods:</div>
<div class="t" style="left:754.4px;top:255.00px;font-size:12px;line-height:15px;color:#111;">NONE</div>
<div class="t" style="left:594.4px;top:277.00px;font-size:12px;line-height:15px;color:#111;">Go-Home Switch:</div>
<div class="t" style="left:754.4px;top:277.00px;font-size:12px;line-height:15px;color:#111;">NONE</div>
<div class="grp" style="left:582px;top:319px;width:244px;height:38px;"></div>
<div class="t lg" style="left:589px;top:313.00px;font-size:11.7px;line-height:14px;transform:scaleY(1.12);transform-origin:0 11px;">IOC</div>
<div class="t" style="left:594.4px;top:331.00px;font-size:12px;line-height:15px;color:#111;">Intelligent Orientation Control:</div>
<div class="t" style="left:764px;top:331.00px;font-size:12px;line-height:15px;color:#111;">NONE</div>
<div class="grp" style="left:582px;top:371px;width:244px;height:37px;"></div>
<div class="t lg" style="left:589px;top:365.00px;font-size:11.7px;line-height:14px;transform:scaleY(1.12);transform-origin:0 11px;">Gimbal</div>
<div class="t" style="left:592.7px;top:387.00px;font-size:12px;line-height:15px;color:#111;">Gimbal Switch:</div>
<div class="t" style="left:766.4px;top:387.00px;font-size:12px;line-height:15px;color:#111;">NONE</div>
<div class="grp" style="left:582px;top:424px;width:244px;height:121px;"></div>
<div class="t lg" style="left:589px;top:418.00px;font-size:11.7px;line-height:14px;transform:scaleY(1.12);transform-origin:0 11px;">Voltage</div>
<div class="t" style="left:592.2px;top:438.00px;font-size:12px;line-height:15px;color:#111;">Protection Switch:</div>
<div class="t" style="left:756.4px;top:438.00px;font-size:12px;line-height:15px;color:#111;">NONE</div>
<div class="t" style="left:592.2px;top:461.00px;font-size:12px;line-height:15px;color:#111;">Current Voltage:</div>
<div class="t" style="left:756.4px;top:461.00px;font-size:12px;line-height:15px;color:#111;">NONE</div>
<div class="t" style="left:592.2px;top:482.00px;font-size:12px;line-height:15px;color:#111;">Battery Type:</div>
<div class="t" style="left:756.4px;top:482.00px;font-size:12px;line-height:15px;color:#111;">NONE</div>
<div class="t" style="left:592.2px;top:504.00px;font-size:12px;line-height:15px;color:#111;">First Level Protection:</div>
<div class="t" style="left:756.4px;top:504.00px;font-size:12px;line-height:15px;color:#111;">NONE</div>
<div class="t" style="left:592.2px;top:525.00px;font-size:12px;line-height:15px;color:#111;">Second Level Protection:</div>
<div class="t" style="left:756.4px;top:525.00px;font-size:12px;line-height:15px;color:#111;">NONE</div>
<svg class="r" style="left:20.7px;top:576.6px" width="20" height="20" viewBox="0 0 20 20">
<defs><radialGradient id="lg30" cx="0.42" cy="0.38" r="0.68"><stop offset="0" stop-color="#a01212"/><stop offset="1" stop-color="#4a0606"/></radialGradient></defs>
<circle cx="10" cy="10.3" r="8.2" fill="#0e0404"/>
<circle cx="10" cy="10.4" r="7.7" fill="none" stroke="#3a3232" stroke-width="0.9"/><path d="M2.8 13 A7.7 7.7 0 0 0 17.2 13" fill="none" stroke="#5a5252" stroke-width="1"/>
<circle cx="10" cy="10" r="6" fill="url(#lg30)"/>
<circle cx="8.2" cy="7.8" r="1.1" fill="#e89090"/>
</svg>
<svg class="r" style="left:50.3px;top:576.6px" width="20" height="20" viewBox="0 0 20 20">
<defs><radialGradient id="lg60" cx="0.42" cy="0.38" r="0.68"><stop offset="0" stop-color="#28569c"/><stop offset="1" stop-color="#0c2250"/></radialGradient></defs>
<circle cx="10" cy="10.3" r="8.2" fill="#0e0404"/>
<circle cx="10" cy="10.4" r="7.7" fill="none" stroke="#3a3232" stroke-width="0.9"/><path d="M2.8 13 A7.7 7.7 0 0 0 17.2 13" fill="none" stroke="#5a5252" stroke-width="1"/>
<circle cx="10" cy="10" r="6" fill="url(#lg60)"/>
<circle cx="8.2" cy="7.8" r="1.1" fill="#b8d4f4"/>
</svg>
<div class="t" style="left:88.2px;top:581.00px;font-size:12px;line-height:15px;color:#f0f0f0;">MODE:</div>
<div class="t" style="left:156.2px;top:581.00px;font-size:12px;line-height:15px;color:#f0f0f0;">N/A</div>
<div class="t" style="left:205.5px;top:581.00px;font-size:12px;line-height:15px;color:#f0f0f0;">MC OUTPUT:</div>
<div class="t" style="left:307.4px;top:581.00px;font-size:12px;line-height:15px;color:#f0f0f0;">ON</div>
</div></div>
</body></html>
